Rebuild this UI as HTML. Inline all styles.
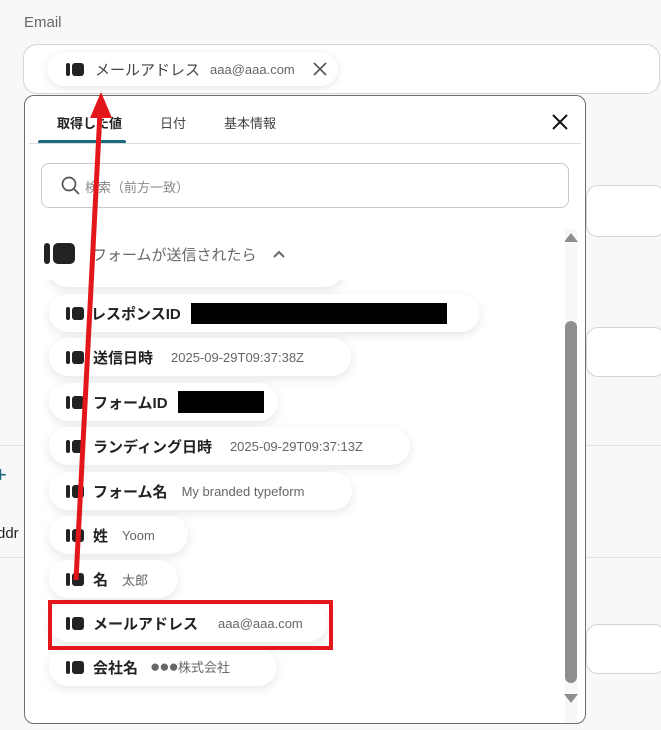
<!DOCTYPE html>
<html><head><meta charset="utf-8"><style>
*{box-sizing:border-box;margin:0;padding:0}
body{width:661px;height:730px;overflow:hidden;background:#f8f8f8;font-family:"Liberation Sans","Noto Sans CJK JP",sans-serif;position:relative;color:#222}
.abs{position:absolute}
.ic{display:inline-block;position:relative;width:18px;height:13px;vertical-align:middle;flex:none}
.ic:before{content:"";position:absolute;left:0;top:0;width:4px;height:13px;border-radius:2px;background:#222}
.ic:after{content:"";position:absolute;left:6px;top:0;width:12px;height:13px;border-radius:3px;background:#222}
.pill{position:absolute;left:49px;height:38px;background:#fff;border-radius:19px;box-shadow:0 3px 10px rgba(0,0,0,.10);display:flex;align-items:center;padding-left:17px;white-space:nowrap}
.pill b{font-size:15px;margin-left:9px;color:#222}
.pill i{font-style:normal;font-size:13px;color:#666;margin-left:18px}
.blk{display:inline-block;background:#000;height:21px;margin-left:10px}
</style></head><body>
<div class="abs" style="left:24px;top:14px;font-size:15px;color:#666">Email</div>
<div class="abs" style="left:23px;top:44px;width:637px;height:50px;border:1px solid #d4d4d4;border-radius:14px;background:#fff"></div>
<div class="abs" style="left:47px;top:52px;width:291px;height:34px;border-radius:17px;background:#fff;box-shadow:0 2px 8px rgba(0,0,0,.1);"></div>
<div class="abs" style="left:66px;top:59px;white-space:nowrap;font-size:15px;color:#444;display:flex;align-items:center;height:20px"><span class="ic"></span><span style="margin-left:11px">メールアドレス</span><span style="margin-left:10px;font-size:13px;color:#666">aaa@aaa.com</span></div>
<svg class="abs" style="left:313px;top:62px" width="14" height="14"><path d="M1 1L13 13M13 1L1 13" stroke="#555" stroke-width="1.6"/></svg>
<div class="abs" style="left:586px;top:185px;width:80px;height:52px;border:1px solid #d4d4d4;border-radius:12px;background:#fff"></div>
<div class="abs" style="left:586px;top:327px;width:80px;height:50px;border:1px solid #d4d4d4;border-radius:12px;background:#fff"></div>
<div class="abs" style="left:586px;top:624px;width:80px;height:50px;border:1px solid #d4d4d4;border-radius:12px;background:#fff"></div>
<div class="abs" style="left:0;top:445px;width:661px;height:1px;background:#e2e2e2"></div>
<div class="abs" style="left:0;top:557px;width:661px;height:1px;background:#e2e2e2"></div>
<div class="abs" style="left:-6px;top:462px;font-size:22px;color:#1c6b7e">+</div>
<div class="abs" style="left:-3px;top:525px;font-size:15px;color:#222">ddr</div>

<div class="abs" style="left:24px;top:95px;width:562px;height:629px;border:1px solid #6e6e6e;border-radius:10px;background:#fff;overflow:hidden">
 <div class="abs" style="left:32px;top:17px;font-size:13px;font-weight:bold;color:#222">取得した値</div>
 <div class="abs" style="left:135px;top:17px;font-size:13px;color:#444">日付</div>
 <div class="abs" style="left:199px;top:17px;font-size:13px;color:#444">基本情報</div>
 <div class="abs" style="left:13px;top:44px;width:88px;height:4px;background:#1c6b7e;border-radius:2px"></div>
 <div class="abs" style="left:4px;top:47px;width:552px;height:1px;background:#ddd"></div>
 <svg class="abs" style="left:525px;top:16px" width="20" height="20"><path d="M3 3L17 17M17 3L3 17" stroke="#111" stroke-width="2"/></svg>
 <div class="abs" style="left:16px;top:67px;width:528px;height:45px;border:1px solid #c8c8c8;border-radius:8px"></div>
 <svg class="abs" style="left:36px;top:80px" width="20" height="20"><circle cx="8" cy="8" r="6.5" fill="none" stroke="#555" stroke-width="1.7"/><path d="M13 13L18 18" stroke="#555" stroke-width="1.8"/></svg>
 <div class="abs" style="left:60px;top:81px;font-size:13px;color:#888">検索（前方一致）</div>
 <div class="abs" style="left:540px;top:133px;width:12px;height:495px;background:#f7f7f7"></div>
 <div class="abs" style="left:540px;top:225px;width:12px;height:362px;background:#8e8e8e;border-radius:6px"></div>
 <div class="abs" style="left:539px;top:137px;width:0;height:0;border-left:7px solid transparent;border-right:7px solid transparent;border-bottom:9px solid #8e8e8e"></div>
 <div class="abs" style="left:539px;top:598px;width:0;height:0;border-left:7px solid transparent;border-right:7px solid transparent;border-top:9px solid #8e8e8e"></div>
</div>
<div class="abs" style="left:49px;top:250px;width:294px;height:37px;background:#fff;border-radius:18px;box-shadow:0 3px 10px rgba(0,0,0,.10)"></div>
<div class="abs" style="left:30px;top:228px;width:535px;height:52px;background:#fff"></div>
<div class="abs" style="left:44px;top:243px;width:31px;height:21px"><span style="position:absolute;left:0;top:0;width:6px;height:21px;border-radius:3px;background:#222"></span><span style="position:absolute;left:9px;top:0;width:22px;height:21px;border-radius:5px;background:#222"></span></div>
<div class="abs" style="left:92px;top:244px;font-size:15px;color:#666">フォームが送信されたら</div>
<svg class="abs" style="left:272px;top:249px" width="14" height="10"><path d="M2 8L7 3L12 8" fill="none" stroke="#666" stroke-width="2"/></svg>

<div class="pill" style="top:294px;width:431px"><span class="ic"></span><b style="margin-left:7px">レスポンスID</b><span class="blk" style="width:256px"></span></div>
<div class="pill" style="top:338px;width:302px"><span class="ic"></span><b>送信日時</b><i>2025-09-29T09:37:38Z</i></div>
<div class="pill" style="top:383px;width:229px"><span class="ic"></span><b>フォームID</b><span class="blk" style="width:86px;height:22px"></span></div>
<div class="pill" style="top:427px;width:361px"><span class="ic"></span><b>ランディング日時</b><i>2025-09-29T09:37:13Z</i></div>
<div class="pill" style="top:472px;width:303px"><span class="ic"></span><b>フォーム名</b><i style="margin-left:14px">My branded typeform</i></div>
<div class="pill" style="top:516px;width:139px"><span class="ic"></span><b>姓</b><i style="margin-left:14px">Yoom</i></div>
<div class="pill" style="top:560px;width:129px"><span class="ic"></span><b>名</b><i style="margin-left:14px">太郎</i></div>
<div class="pill" style="top:604px;width:278px"><span class="ic"></span><b>メールアドレス</b><i style="margin-left:20px">aaa@aaa.com</i></div>
<div class="pill" style="top:648px;width:228px"><span class="ic"></span><b>会社名</b><i style="margin-left:12px"><span style="font-size:17px;letter-spacing:-1px">●●●</span>株式会社</i></div>
<div class="abs" style="left:48px;top:600px;width:285px;height:50px;border:4px solid #e3161c"></div>
<svg class="abs" style="left:0;top:0" width="661" height="730"><path d="M76 580L100 112" stroke="#e3161c" stroke-width="5"/><path d="M101 92L90 118L112 118Z" fill="#e3161c"/></svg>
</body></html>
